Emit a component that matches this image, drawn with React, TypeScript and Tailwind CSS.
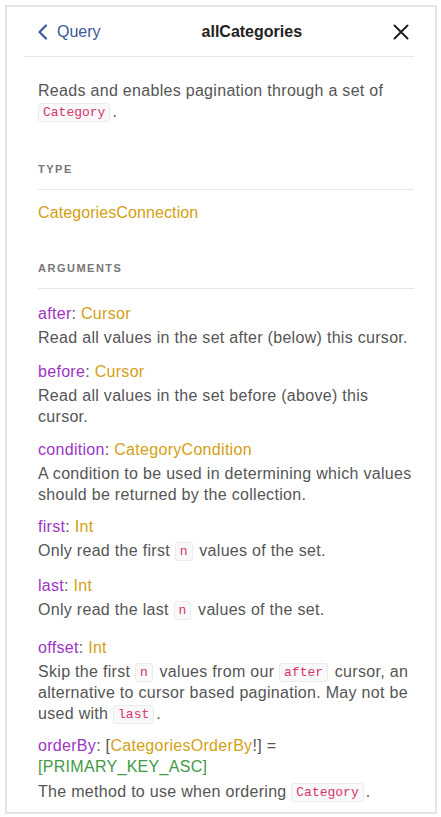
import React from "react";

const Code = ({ children }: { children: React.ReactNode }) => (
  <code className="inline-block rounded-[3px] border border-[#ececec] bg-[#f9f9f9] px-[4px] mr-[2px] text-[13px] leading-[17px] tracking-normal text-[#d6336c] font-['Liberation_Mono',monospace] align-[1px]">
    {children}
  </code>
);

const Name = ({ children }: { children: React.ReactNode }) => (
  <span className="text-[#9c35c4]">{children}</span>
);
const Type = ({ children }: { children: React.ReactNode }) => (
  <span className="text-[#d3a012]">{children}</span>
);

const Arg = ({
  name,
  type,
  children,
  mb = "mb-[11px]",
}: {
  name: string;
  type: React.ReactNode;
  children: React.ReactNode;
  mb?: string;
}) => (
  <div className={mb}>
    <div className="leading-[24px]">
      <Name>{name}</Name>
      <span className="text-[#555]">: </span>
      {type}
    </div>
    <div className="mt-[1px] leading-[21px] text-[#555]">{children}</div>
  </div>
);

export default function App() {
  return (
    <div className="w-[441px] h-[817px] bg-white pt-[5px] pl-[5px] font-['Liberation_Sans',Arial,sans-serif] text-[16px] tracking-[0.3px] overflow-hidden">
      <div className="w-[432px] h-[809px] border-2 border-[#e4e4e4] overflow-hidden">
        <div className="ml-[17px] mr-[21px] h-[50px] border-b border-[#e8e8e8] flex items-center pl-[13px] pr-[5px] tracking-normal">
          <div className="flex items-center text-[16px] text-[#3b5998]">
            <svg width="11" height="16" viewBox="0 0 11 16" className="mr-[9px]">
              <path d="M9 1.5 L2.5 8 L9 14.5" fill="none" stroke="#3b5998" strokeWidth="2.2" strokeLinecap="round" strokeLinejoin="round" />
            </svg>
            <span>Query</span>
          </div>
          <div className="flex-1 text-center pl-[10px] text-[16px] font-bold text-[#222]">allCategories</div>
          <svg width="16" height="16" viewBox="0 0 16 16">
            <path d="M1.5 1.5 L14.5 14.5 M14.5 1.5 L1.5 14.5" stroke="#222" strokeWidth="2" strokeLinecap="round" />
          </svg>
        </div>

        <div className="ml-[31px] mr-[21px]">
          <div className="mt-[23px] leading-[21px] text-[#555]">
            Reads and enables pagination through a set of <Code>Category</Code>.
          </div>

          <div className="mt-[40px] pb-[13px] border-b border-[#e6e6e6] text-[11px] leading-[14px] font-bold tracking-[1.5px] text-[#777]">
            TYPE
          </div>
          <div className="mt-[12px] leading-[21px] tracking-[0.1px]">
            <Type>CategoriesConnection</Type>
          </div>

          <div className="mt-[38px] pb-[13px] border-b border-[#e6e6e6] text-[11px] leading-[14px] font-bold tracking-[1.5px] text-[#777]">
            ARGUMENTS
          </div>

          <div className="mt-[13px]">
            <Arg name="after" type={<Type>Cursor</Type>} mb="mb-[12px]">
              Read all values in the set after (below) this cursor.
            </Arg>
            <Arg name="before" type={<Type>Cursor</Type>}>
              Read all values in the set before (above) this
              <br />
              cursor.
            </Arg>
            <Arg name="condition" type={<Type>CategoryCondition</Type>} mb="mb-[10px]">
              A condition to be used in determining which values should be returned by the collection.
            </Arg>
            <Arg name="first" type={<Type>Int</Type>} mb="mb-[13px]">
              Only read the first <Code>n</Code> values of the set.
            </Arg>
            <Arg name="last" type={<Type>Int</Type>} mb="mb-[16px]">
              Only read the last <Code>n</Code> values of the set.
            </Arg>
            <Arg name="offset" type={<Type>Int</Type>} mb="mb-[9px]">
              Skip the first <Code>n</Code> values from our <Code>after</Code> cursor, an alternative to cursor based pagination. May not be used with <Code>last</Code>.
            </Arg>
            <div>
              <div className="leading-[21px] pt-[2px]">
                <Name>orderBy</Name>
                <span className="text-[#555]">: [</span>
                <Type>CategoriesOrderBy</Type>
                <span className="text-[#555]">!] = </span>
                <span className="text-[#3f9a45]">[PRIMARY_KEY_ASC]</span>
              </div>
              <div className="mt-[4px] leading-[21px] text-[#555]">
                The method to use when ordering <Code>Category</Code>.
              </div>
            </div>
          </div>
        </div>
      </div>
    </div>
  );
}
